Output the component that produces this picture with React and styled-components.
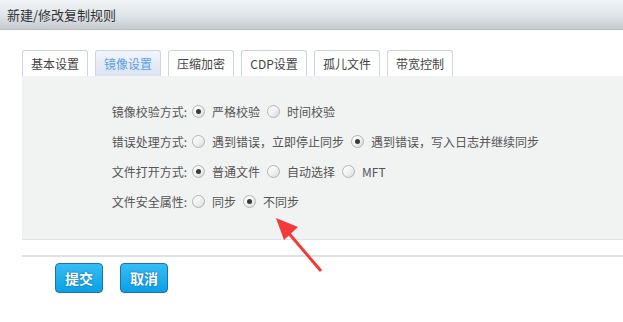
import React from "react";
import styled, { createGlobalStyle } from "styled-components";

const GlobalStyle = createGlobalStyle`
  html, body {
    margin: 0;
    padding: 0;
    background: #fff;
  }
  body {
    font-family: "Noto Sans CJK SC", "Noto Sans", sans-serif;
    font-size: 12px;
    color: #555;
  }
`;

const tabs = ["基本设置", "镜像设置", "压缩加密", "CDP设置", "孤儿文件", "带宽控制"];

const rows = [
  { label: "镜像校验方式:", options: ["严格校验", "时间校验"], checked: 0 },
  {
    label: "错误处理方式:",
    options: ["遇到错误，立即停止同步", "遇到错误，写入日志并继续同步"],
    checked: 1,
  },
  { label: "文件打开方式:", options: ["普通文件", "自动选择", "MFT"], checked: 0 },
  { label: "文件安全属性:", options: ["同步", "不同步"], checked: 1 },
];

const App = () => {
  return (
    <Page>
      <GlobalStyle />
      <Header>新建/修改复制规则</Header>
      <Body>
        <TabBar>
          {tabs.map((t, i) => (
            <Tab key={t} active={i === 1}>
              {t}
            </Tab>
          ))}
        </TabBar>
        <Panel>
          {rows.map((r) => (
            <Row key={r.label}>
              <Label>{r.label}</Label>
              {r.options.map((o, i) => (
                <Option key={o}>
                  <Radio checked={i === r.checked} />
                  <OptionText>{o}</OptionText>
                </Option>
              ))}
            </Row>
          ))}
        </Panel>
        <Divider />
        <Actions>
          <Button>提交</Button>
          <Button>取消</Button>
        </Actions>
      </Body>
      <Arrow width="60" height="60" viewBox="0 0 60 60">
        <line x1="49" y1="55" x2="14" y2="14" stroke="#f23a3a" strokeWidth="3" />
        <polygon points="4,2 26,11 12,24" fill="#f23a3a" />
      </Arrow>
    </Page>
  );
};

export default App;

const Page = styled.div`
  position: relative;
  width: 623px;
  height: 322px;
  overflow: hidden;
`;

const Header = styled.div`
  height: 29px;
  line-height: 30px;
  padding-left: 7px;
  font-size: 13px;
  color: #333;
  background: linear-gradient(to bottom, #f1f4f6 0%, #dfe4e8 55%, #c4cacf 100%);
  border-bottom: 1px solid #b6bdc3;
`;

const Body = styled.div`
  padding: 20px 0 0 22px;
`;

const TabBar = styled.div`
  display: flex;
  gap: 7px;
  height: 26px;
`;

const Tab = styled.div`
  width: 64px;
  height: 25px;
  line-height: 26px;
  text-align: center;
  font-size: 12px;
  color: ${(p) => (p.active ? "#5a9ee6" : "#444")};
  border: 1px solid ${(p) => (p.active ? "#c9d6e6" : "#cdd5dc")};
  border-bottom: none;
  border-radius: 3px 3px 0 0;
  background: ${(p) =>
    p.active ? "linear-gradient(to bottom, #f2f5fa 0%, #d9e3f1 100%)" : "#fff"};
`;

const Panel = styled.div`
  height: 164px;
  background: #f1f2f2;
  border-bottom: 1px solid #dde4ea;
  padding-top: 20px;
  box-sizing: border-box;
  display: flex;
  flex-direction: column;
`;

const Row = styled.div`
  display: flex;
  align-items: center;
  height: 30px;
`;

const Label = styled.div`
  width: 165px;
  text-align: right;
  color: #555;
`;

const Option = styled.label`
  display: flex;
  align-items: center;
  margin-right: 2px;
`;

const Radio = styled.span`
  width: 11px;
  height: 11px;
  border-radius: 50%;
  border: 1px solid #b4b4b4;
  background: linear-gradient(135deg, #ffffff 0%, #f2f2f2 50%, #d8d8d8 100%);
  margin-left: 5px;
  margin-right: 7px;
  display: flex;
  align-items: center;
  justify-content: center;
  &::after {
    content: "";
    display: ${(p) => (p.checked ? "block" : "none")};
    width: 5px;
    height: 5px;
    border-radius: 50%;
    background: #3a3a3a;
  }
`;

const OptionText = styled.span`
  color: #555;
`;

const Divider = styled.div`
  margin-top: 15px;
  height: 2px;
  background: #e1e1e1;
`;

const Actions = styled.div`
  display: flex;
  gap: 17px;
  padding: 6px 0 0 33px;
`;

const Button = styled.div`
  width: 46px;
  height: 28px;
  line-height: 28px;
  text-align: center;
  font-size: 14px;
  font-weight: bold;
  color: #fff;
  text-shadow: 0 0 2px #0a5a95;
  border: 1px solid #1b73b3;
  border-radius: 4px;
  background: linear-gradient(to bottom, #36bdf3 0%, #0aa0e6 100%);
`;

const Arrow = styled.svg`
  position: absolute;
  left: 272px;
  top: 216px;
`;
